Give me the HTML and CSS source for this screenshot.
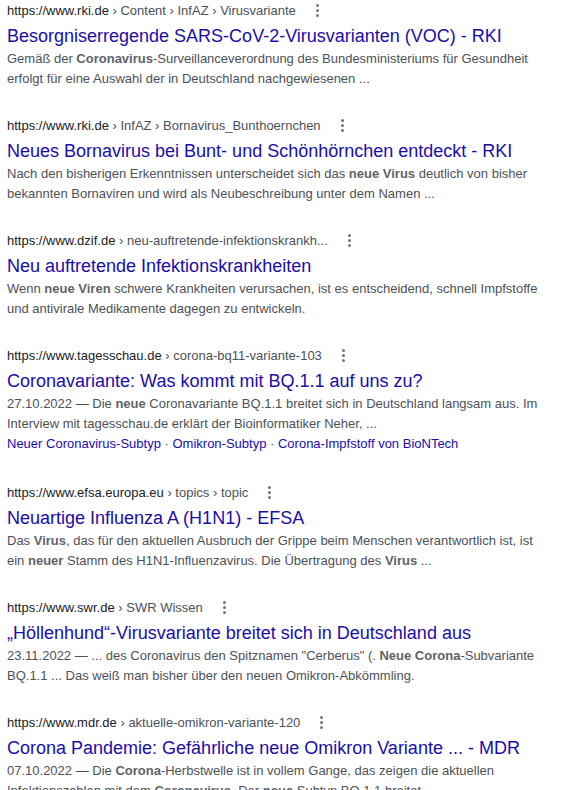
FILE: index.html
```html
<!DOCTYPE html>
<html lang="de">
<head>
<meta charset="utf-8">
<link rel="stylesheet" href="styles.css">
</head>
<body>
<main class="results">
  <div class="result">
    <div class="cite"><span class="host">https://www.rki.de</span><span class="path"> › Content › InfAZ › Virusvariante</span><span class="more"><i></i><i></i><i></i></span></div>
    <h3 class="title">Besorgniserregende SARS-CoV-2-Virusvarianten (VOC) - RKI</h3>
    <div class="snippet">Gemäß der <b>Coronavirus</b>-Surveillanceverordnung des Bundesministeriums für Gesundheit erfolgt für eine Auswahl der in Deutschland nachgewiesenen ...</div>
  </div>
  <div class="result">
    <div class="cite"><span class="host">https://www.rki.de</span><span class="path"> › InfAZ › Bornavirus_Bunthoernchen</span><span class="more"><i></i><i></i><i></i></span></div>
    <h3 class="title">Neues Bornavirus bei Bunt- und Schönhörnchen entdeckt - RKI</h3>
    <div class="snippet">Nach den bisherigen Erkenntnissen unterscheidet sich das <b>neue Virus</b> deutlich von bisher bekannten Bornaviren und wird als Neubeschreibung unter dem Namen ...</div>
  </div>
  <div class="result">
    <div class="cite"><span class="host">https://www.dzif.de</span><span class="path"> › neu-auftretende-infektionskrankh...</span><span class="more"><i></i><i></i><i></i></span></div>
    <h3 class="title">Neu auftretende Infektionskrankheiten</h3>
    <div class="snippet">Wenn <b>neue Viren</b> schwere Krankheiten verursachen, ist es entscheidend, schnell Impfstoffe und antivirale Medikamente dagegen zu entwickeln.</div>
  </div>
  <div class="result">
    <div class="cite"><span class="host">https://www.tagesschau.de</span><span class="path"> › corona-bq11-variante-103</span><span class="more"><i></i><i></i><i></i></span></div>
    <h3 class="title">Coronavariante: Was kommt mit BQ.1.1 auf uns zu?</h3>
    <div class="snippet">27.10.2022 — Die <b>neue</b> Coronavariante BQ.1.1 breitet sich in Deutschland langsam aus. Im Interview mit tagesschau.de erklärt der Bioinformatiker Neher, ...</div>
    <div class="sitelinks"><a>Neuer Coronavirus-Subtyp</a><span class="sep"> · </span><a>Omikron-Subtyp</a><span class="sep"> · </span><a>Corona-Impfstoff von BioNTech</a></div>
  </div>
  <div class="result">
    <div class="cite"><span class="host">https://www.efsa.europa.eu</span><span class="path"> › topics › topic</span><span class="more"><i></i><i></i><i></i></span></div>
    <h3 class="title">Neuartige Influenza A (H1N1) - EFSA</h3>
    <div class="snippet">Das <b>Virus</b>, das für den aktuellen Ausbruch der Grippe beim Menschen verantwortlich ist, ist ein <b>neuer</b> Stamm des H1N1-Influenzavirus. Die Übertragung des <b>Virus</b> ...</div>
  </div>
  <div class="result">
    <div class="cite"><span class="host">https://www.swr.de</span><span class="path"> › SWR Wissen</span><span class="more"><i></i><i></i><i></i></span></div>
    <h3 class="title">„Höllenhund“-Virusvariante breitet sich in Deutschland aus</h3>
    <div class="snippet">23.11.2022 — ... des Coronavirus den Spitznamen "Cerberus" (. <b>Neue Corona</b>-Subvariante BQ.1.1 ... Das weiß man bisher über den neuen Omikron-Abkömmling.</div>
  </div>
  <div class="result">
    <div class="cite"><span class="host">https://www.mdr.de</span><span class="path"> › aktuelle-omikron-variante-120</span><span class="more"><i></i><i></i><i></i></span></div>
    <h3 class="title">Corona Pandemie: Gefährliche neue Omikron Variante ... - MDR</h3>
    <div class="snippet">07.10.2022 — Die <b>Corona</b>-Herbstwelle ist in vollem Gange, das zeigen die aktuellen Infektionszahlen mit dem <b>Coronavirus</b>. Der <b>neue</b> Subtyp BQ.1.1 breitet ...</div>
  </div>
</main>
</body>
</html>
```
FILE: styles.css
```css
html, body {
  margin: 0;
  padding: 0;
  background: #ffffff;
}
body {
  font-family: "Liberation Sans", Arial, sans-serif;
  color: #4d5156;
  overflow: hidden;
}
.results {
  display: flex;
  flex-direction: column;
  gap: 27px;
  padding: 1px 7px 0;
  width: 546px;
}
.result {
  display: flex;
  flex-direction: column;
}
.cite {
  display: flex;
  align-items: center;
  height: 20px;
  font-size: 13px;
  line-height: 20px;
  white-space: nowrap;
}
.host {
  color: #202124;
}
.path {
  color: #4d5156;
  white-space: pre;
}
.more {
  display: inline-flex;
  flex-direction: column;
  gap: 2px;
  margin-left: 20px;
  padding-bottom: 2px;
}
.more i {
  display: block;
  width: 3px;
  height: 3px;
  border-radius: 50%;
  background: #70757a;
}
.title {
  margin: 2px 0 0;
  font-size: 18px;
  line-height: 26px;
  font-weight: normal;
  color: #1a0dab;
  white-space: nowrap;
}
.snippet {
  font-size: 13px;
  line-height: 20px;
  color: #4d5156;
}
.snippet b {
  color: #5f6368;
}
.sitelinks {
  margin-bottom: 3px;
  font-size: 13px;
  line-height: 19px;
  color: #4d5156;
}
.sitelinks a {
  color: #1a0dab;
}
```
